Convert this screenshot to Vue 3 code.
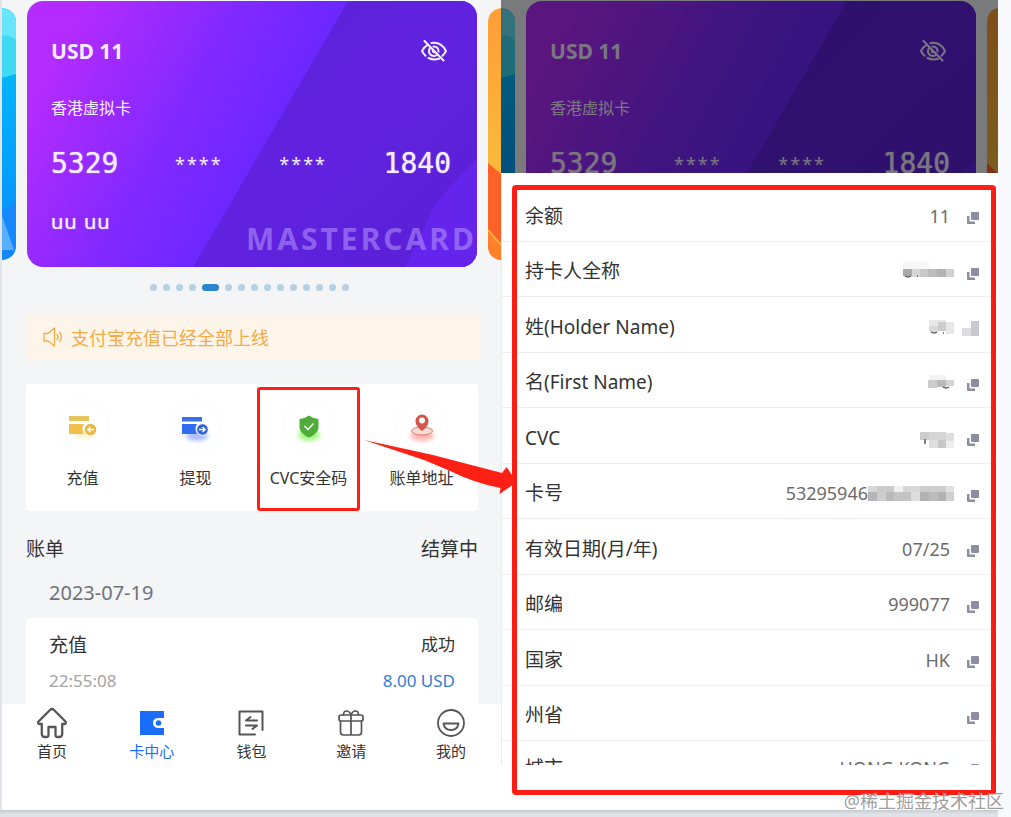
<script setup>
import { ref } from 'vue'

const screens = ['center', 'detail']
const activeTab = ref('card')
const activeDot = 4

const actions = [
  { value: 'recharge', label: '充值' },
  { value: 'withdraw', label: '提现' },
  { value: 'cvc', label: 'CVC安全码', marked: true },
  { value: 'address', label: '账单地址' },
]

const tabs = [
  { value: 'home', label: '首页' },
  { value: 'card', label: '卡中心' },
  { value: 'wallet', label: '钱包' },
  { value: 'invite', label: '邀请' },
  { value: 'mine', label: '我的' },
]

// mask cells: [x, y, width, height, color]
const details = [
  { label: '余额', value: '11' },
  {
    label: '持卡人全称',
    mask: [
      [35, 2, 26, 7, '#f6f6f6'],
      [35, 9, 9, 7, '#a9a9a9'],
      [44, 9, 8, 8, '#d6d6d6'],
      [52, 9, 8, 8, '#c9c9c9'],
      [60, 9, 9, 8, '#bdbdbd'],
      [69, 9, 9, 8, '#b3b3b3'],
      [78, 9, 8, 8, '#d0d0d0'],
    ],
    trace: 'M37 16q3 2 6 0M49 16h1',
  },
  {
    label: '姓(Holder Name)',
    hiddenCopy: true,
    mask: [
      [61, 4, 17, 6, '#e8e8e8'],
      [61, 10, 9, 6, '#d8d8d8'],
      [70, 6, 8, 9, '#cccccc'],
      [78, 6, 8, 12, '#e7e7e7'],
    ],
    trace: 'M63 16q3 2 6 0M75 17h1',
  },
  {
    label: '名(First Name)',
    mask: [
      [61, 4, 17, 5, '#f2f2f2'],
      [60, 9, 9, 8, '#cccccc'],
      [69, 9, 9, 7, '#b9b9b9'],
      [78, 9, 8, 6, '#d4d4d4'],
    ],
    trace: 'M75 16q3 2 6 0',
  },
  {
    label: 'CVC',
    mask: [
      [52, 5, 9, 8, '#cccccc'],
      [61, 5, 17, 8, '#d5d5d5'],
      [78, 6, 8, 8, '#dddddd'],
      [61, 13, 9, 8, '#dedede'],
      [70, 13, 8, 8, '#c8c8c8'],
      [78, 14, 8, 7, '#eeeeee'],
    ],
    trace: 'M57 12v5',
  },
  {
    label: '卡号',
    value: '53295946',
    mask: [
      [0, 4, 9, 6, '#d7d7d7'],
      [9, 4, 17, 6, '#cbcbcb'],
      [26, 4, 9, 6, '#f0f0f0'],
      [35, 4, 17, 6, '#d8d8d8'],
      [52, 4, 26, 6, '#cdcdcd'],
      [78, 4, 8, 6, '#e2e2e2'],
      [0, 10, 9, 9, '#b5b5b5'],
      [9, 10, 9, 9, '#cdcdcd'],
      [18, 10, 8, 9, '#b9b9b9'],
      [26, 10, 17, 9, '#c4c4c4'],
      [43, 10, 9, 9, '#dddddd'],
      [52, 10, 9, 9, '#b3b3b3'],
      [61, 10, 9, 9, '#bcbcbc'],
      [70, 10, 8, 9, '#b2b2b2'],
      [78, 10, 8, 9, '#cfcfcf'],
    ],
  },
  { label: '有效日期(月/年)', value: '07/25' },
  { label: '邮编', value: '999077' },
  { label: '国家', value: 'HK' },
  { label: '州省', value: '' },
  { label: '城市', value: 'HONG KONG' },
]
</script>

<template>
  <div class="page">
    <main class="board">
      <section v-for="screen in screens" :key="screen" class="phone" :class="screen">
        <div class="hero">
          <div class="carousel">
            <svg class="peek" viewBox="0 0 14 252" preserveAspectRatio="none" aria-hidden="true">
              <defs>
                <linearGradient id="sea" x1="0" y1="0" x2="0" y2="1">
                  <stop offset="0" stop-color="#00c3f6" />
                  <stop offset="1" stop-color="#078cff" />
                </linearGradient>
              </defs>
              <path d="M0 0Q14 2 14 15V237Q14 250 0 252Z" fill="url(#sea)" />
              <path d="M0 0Q14 2 14 15V66L0 70Z" fill="#3ed9f2" />
              <path d="M0 0Q14 2 14 15V32Q7 26 0 28Z" fill="#66e5fb" />
              <path d="M0 202Q10 200 14 190V237Q14 250 0 252Z" fill="#1688fb" />
              <path d="M0 208L12 242H0Z" fill="#5aaeff" />
            </svg>

            <article class="bank-card">
              <svg class="card-art" viewBox="0 0 450 266" preserveAspectRatio="none" aria-hidden="true">
                <defs>
                  <linearGradient id="violet" gradientUnits="userSpaceOnUse" x1="30" y1="50" x2="250" y2="170">
                    <stop offset="0" stop-color="#b42bff" />
                    <stop offset="0.55" stop-color="#8129ff" />
                    <stop offset="1" stop-color="#6727ff" />
                  </linearGradient>
                  <linearGradient id="deep" x1="0" y1="0" x2="1" y2="1">
                    <stop offset="0" stop-color="#5b20d6" />
                    <stop offset="0.5" stop-color="#6022df" />
                    <stop offset="1" stop-color="#5a1fd6" />
                  </linearGradient>
                </defs>
                <path d="M0 0H450V266H0Z" fill="url(#violet)" />
                <path d="M321 0H450V266H166L213 186Z" fill="url(#deep)" />
                <path d="M450 158Q414 192 402 216L378 266H450Z" fill="#6524ec" />
              </svg>
              <div class="card-body">
                <div class="card-top">
                  <strong class="balance">USD 11</strong>
                  <button type="button" class="eye-button" aria-label="显示余额">
                    <svg width="26" height="22" viewBox="0 0 26 22" fill="none" stroke="currentColor" stroke-width="2" stroke-linecap="round">
                      <path d="M7 4.600C4.500 6 2.600 8 1 11c1 2 2 3.500 3.500 4.800M10.500 3C17 2 22 5 25 11c-1 2-2 3.500-3.500 4.800M7.500 18q5 2.500 10.500 .8" />
                      <path d="M9 8c-2.500 4 0 8 4 8 1.300 0 2.300-.4 3.200-1.200M12.500 6.600c3.500-.2 5.300 2.200 5 5" />
                      <path d="M12.200 9.800c-1 1.300 0 2.600 1.600 2.400M3.500 1L22.500 20.500" />
                    </svg>
                  </button>
                </div>
                <p class="card-name">香港虚拟卡</p>
                <p class="card-number">
                  <span>5329</span>
                  <span class="stars">****</span>
                  <span class="stars">****</span>
                  <span>1840</span>
                </p>
                <p class="card-holder">uu uu</p>
              </div>
              <span class="card-brand">MASTERCARD</span>
            </article>

            <svg class="peek" viewBox="0 0 13 252" preserveAspectRatio="none" aria-hidden="true">
              <defs>
                <linearGradient id="sun" x1="0" y1="0" x2="0" y2="1">
                  <stop offset="0" stop-color="#ff9d36" />
                  <stop offset="0.6" stop-color="#f9b83c" />
                </linearGradient>
              </defs>
              <path d="M13 0Q0 2 0 15V237Q0 250 13 252Z" fill="url(#sun)" />
              <path d="M0 155L13 166V252Q0 250 0 237Z" fill="#ff6129" />
              <path d="M0 222L13 238V252Q0 250 0 237Z" fill="#ff7f2a" />
              <path d="M0 222L13 237" fill="none" stroke="#ffae3c" stroke-width="2" />
            </svg>
          </div>
        </div>

        <template v-if="screen === 'center'">
          <div class="dots">
            <span v-for="n in 15" :key="n" class="dot" :class="{ active: n - 1 === activeDot }"></span>
          </div>

          <div class="notice">
            <svg width="20" height="20" viewBox="0 0 20 20" fill="none" stroke="currentColor" stroke-width="1.3" stroke-linejoin="round" stroke-linecap="round" aria-hidden="true">
              <path d="M1 6.500h4L11.500 1v18L5 14H1z" />
              <path d="M14 7.500q2 2.500 0 5M16.500 5.500q4 4.500 0 9" />
            </svg>
            <span>支付宝充值已经全部上线</span>
          </div>

          <div class="actions">
            <button v-for="action in actions" :key="action.value" type="button" class="action">
              <span class="action-icon">
                <svg v-if="action.value === 'recharge'" width="48" height="48" viewBox="0 0 48 48">
                  <ellipse class="glow" cx="25" cy="32" rx="10" ry="4" fill="#fff0c4" />
                  <path d="M10 14h20v5H10z" fill="#e5c55c" />
                  <path d="M10 22h15q-3 5 0 10H10z" fill="#f0bf4c" />
                  <circle cx="31.500" cy="27.500" r="5.800" fill="#e8b84b" />
                  <path d="M35 27.500h-6m2.400-2.400L29 27.500l2.400 2.400" fill="none" stroke="#fff" stroke-width="1.500" />
                </svg>
                <svg v-else-if="action.value === 'withdraw'" width="48" height="48" viewBox="0 0 48 48">
                  <ellipse class="glow" cx="25" cy="34" rx="11" ry="5" fill="#a9bdff" />
                  <path d="M10 15h20v4.500H10z" fill="#3b6fe8" />
                  <path d="M10 22h15q-3 5 0 10H10z" fill="#316bf0" />
                  <circle cx="30.500" cy="27.500" r="5.800" fill="#3565d8" stroke="#fff" />
                  <path d="M27 27.500h6m-2.400-2.400L33 27.500l-2.400 2.400" fill="none" stroke="#fff" stroke-width="1.500" />
                </svg>
                <svg v-else-if="action.value === 'cvc'" width="48" height="48" viewBox="0 0 48 48">
                  <ellipse class="glow" cx="24" cy="33" rx="11" ry="6" fill="#a4f582" />
                  <path d="M24 13.500q4 3 9.500 3.500v9q-1 6-9.500 9.500-8.500-3.500-9.500-9.500v-9q5.500-.5 9.500-3.500z" fill="#4fac3b" />
                  <path d="M19.500 24l3.500 3.500 5.500-6" fill="none" stroke="#fff" stroke-width="1.500" />
                </svg>
                <svg v-else width="48" height="48" viewBox="0 0 48 48">
                  <ellipse class="glow" cx="24" cy="34" rx="12" ry="5" fill="#ffb5ad" />
                  <ellipse cx="24" cy="29" rx="10.500" ry="4" fill="#fbd9d4" stroke="#dc7a72" />
                  <path d="M24 29q-6.500-5-6.500-10a6.500 6.500 0 0 1 13 0q0 5-6.500 10z" fill="#d45549" />
                  <circle cx="24" cy="18.500" r="3" fill="#fff" />
                </svg>
              </span>
              <span class="action-label">{{ action.label }}</span>
              <span v-if="action.marked" class="mark">
                <svg class="arrow" width="154" height="56" viewBox="0 0 154 56" aria-hidden="true">
                  <path d="M0 0L69 15 138 33 142.500 27 153 42 135.500 54 136.500 48Q110 43 84 30L60 20z" fill="#ff2015" />
                </svg>
              </span>
            </button>
          </div>

          <div class="bill-head">
            <span>账单</span>
            <span>结算中</span>
          </div>
          <time class="bill-date" datetime="2023-07-19">2023-07-19</time>
          <div class="bill">
            <div class="bill-row">
              <span>充值</span>
              <span class="status">成功</span>
            </div>
            <div class="bill-row meta">
              <time>22:55:08</time>
              <span class="amount">8.00 USD</span>
            </div>
          </div>

          <nav class="tab-bar" aria-label="主导航">
            <button
              v-for="tab in tabs"
              :key="tab.value"
              type="button"
              class="tab"
              :class="{ active: activeTab === tab.value }"
              @click="activeTab = tab.value"
            >
              <svg width="32" height="32" viewBox="0 0 32 32" fill="none" stroke="#555" stroke-width="2" stroke-linecap="round" stroke-linejoin="round" aria-hidden="true">
                <path
                  v-if="tab.value === 'home'"
                  stroke-width="2.300"
                  d="M16 2q-1 0-2 1L2.500 14.500q-1 2.500 1 2.500h2.300v10q0 3 3 3h1.700q2 0 2-2v-8h7v8q0 2 2 2h1.700q3 0 3-3V17h2.300q2 0 1-2.500L18 3q-1-1-2-1z"
                />
                <g v-else-if="tab.value === 'card'" stroke="none">
                  <path d="M4 4h24v7h-5q-6 0-6 5t6 5h5v7H4z" fill="#1a6dff" />
                  <circle cx="22.500" cy="16" r="2.800" fill="#1a6dff" />
                </g>
                <g v-else-if="tab.value === 'wallet'">
                  <path d="M20 27.500H4.500V4.500h23V23" />
                  <path d="M11 13.500h11M11 13.500l4.500-3.500M11 18.500h11L17.500 22" />
                </g>
                <g v-else-if="tab.value === 'invite'" stroke-width="1.700">
                  <path d="M6 8h20q2 0 2 2v2q0 2-2 2H6q-2 0-2-2v-2q0-2 2-2zM5.500 14v11q0 3 3 3h15q3 0 3-3V14M16 8v20" />
                  <path d="M16 8q-1.500-4-4.500-4T8.500 8M16 8q1.500-4 4.500-4t3 4" />
                </g>
                <g v-else stroke-width="1.800">
                  <circle cx="16" cy="16" r="13" />
                  <path d="M8.500 16.500h15q-1 6.500-7.500 6.500t-7.500-6.500z" />
                </g>
              </svg>
              <span>{{ tab.label }}</span>
            </button>
          </nav>
        </template>

        <template v-else>
          <dl class="sheet">
            <div v-for="item in details" :key="item.label" class="sheet-row">
              <dt>{{ item.label }}</dt>
              <dd>
                <span>{{ item.value }}</span>
                <svg v-if="item.mask" class="mask" width="86" height="22" viewBox="0 0 86 22" aria-hidden="true">
                  <rect
                    v-for="(cell, i) in item.mask"
                    :key="i"
                    :x="cell[0]"
                    :y="cell[1]"
                    :width="cell[2]"
                    :height="cell[3]"
                    :fill="cell[4]"
                  />
                  <path v-if="item.trace" :d="item.trace" fill="none" stroke="#555" stroke-width="1.500" />
                </svg>
              </dd>
              <button type="button" class="copy-button" :aria-label="'复制' + item.label">
                <svg v-if="item.hiddenCopy" width="17" height="16" viewBox="0 0 17 16">
                  <path d="M0 7h9v8H0z" fill="#dedee2" />
                  <path d="M9 0h8v15H9z" fill="#c9c9cf" />
                </svg>
                <svg v-else width="12" height="12" viewBox="0 0 12 12" fill="#8d8da1">
                  <path d="M5 0h6q1 0 1 1v6q0 1-1 1H5q-1 0-1-1V1q0-1 1-1z" />
                  <path d="M0 4h2.500v5.500H8V12H1q-1 0-1-1z" />
                </svg>
              </button>
            </div>
          </dl>
          <div class="frame"></div>
        </template>
      </section>
    </main>
    <div class="floor"></div>
    <span class="watermark">@稀土掘金技术社区</span>
  </div>
</template>

<style>
body {
  background: #f8f9fd;
}
</style>

<style scoped>
.page {
  position: relative;
  box-sizing: border-box;
  min-height: 100vh;
  padding: 0 13px 0 0;
  display: flex;
  flex-direction: column;
  overflow: hidden;
  color: #333;
  font-family: 'Noto Sans', 'Noto Sans CJK SC', sans-serif;
}

p,
dl,
dd {
  margin: 0;
}

button {
  padding: 0;
  border: 0;
  color: inherit;
  background: transparent;
  font: inherit;
}

svg {
  display: block;
}

.board {
  flex: 1;
  display: grid;
  grid-template-columns: 499fr 497fr;
  border-left: 2px solid #e1e4e8;
  background: #fff;
}

.floor {
  height: 7px;
  background: linear-gradient(#c4c9cd, #dfe3e8 4px);
}

.phone {
  position: relative;
  min-width: 0;
}

.hero {
  position: relative;
  padding-top: 1px;
  background: #f3f5f7;
}

.carousel {
  display: grid;
  grid-template-columns: 14px minmax(0, 1fr) 13px;
  gap: 11px;
  align-items: center;
}

.peek {
  width: 100%;
  height: 252px;
}

.bank-card {
  position: relative;
  box-sizing: border-box;
  height: 266px;
  padding: 36px 26px 0 24px;
  border-radius: 16px;
  overflow: hidden;
  color: #f4edff;
}

.card-art {
  position: absolute;
  inset: 0;
  width: 100%;
  height: 100%;
}

.card-body {
  position: relative;
}

.card-top {
  display: flex;
  align-items: center;
  justify-content: space-between;
  height: 28px;
}

.card-top .eye-button {
  margin-right: 4px;
}

.balance {
  font-size: 21px;
  line-height: 28px;
}

.card-name {
  margin-top: 31px;
  font-size: 16px;
  line-height: 24px;
}

.card-number {
  display: flex;
  align-items: center;
  justify-content: space-between;
  margin-top: 28px;
  font-family: 'DejaVu Sans Mono', monospace;
  font-size: 28px;
  line-height: 32px;
  text-shadow: 0 0 1px currentColor;
}

.stars {
  font-family: 'Noto Sans', sans-serif;
  font-size: 18px;
  letter-spacing: 2px;
  text-shadow: none;
}

.card-holder {
  margin-top: 28px;
  font-size: 20px;
  line-height: 28px;
  letter-spacing: 1px;
  text-shadow: 0 0 1px currentColor;
}

.card-brand {
  position: absolute;
  right: 0;
  bottom: 8px;
  color: rgba(190, 160, 255, 0.5);
  font-size: 30px;
  font-weight: 700;
  line-height: 40px;
  letter-spacing: 3px;
}

.center {
  display: flex;
  flex-direction: column;
  align-self: start;
  background: #f3f5f7;
}

.dots {
  display: flex;
  justify-content: center;
  gap: 6px;
  margin: 17px 4px 0 0;
}

.dot {
  width: 7px;
  height: 7px;
  border-radius: 4px;
  background: #b5cfe3;
}

.dot.active {
  width: 17px;
  background: #2b86d1;
}

.notice {
  display: flex;
  align-items: center;
  gap: 8px;
  height: 46px;
  margin: 23px 21px 0 24px;
  padding-left: 17px;
  border-radius: 3px;
  color: #f5ab45;
  background: #fef5ea;
  font-size: 18px;
}

.actions {
  display: grid;
  grid-template-columns: repeat(4, minmax(0, 1fr));
  height: 127px;
  margin: 24px 23px 0 24px;
  border-radius: 4px;
  background: #fff;
}

.action {
  position: relative;
  display: flex;
  flex-direction: column;
  align-items: center;
  padding-top: 18px;
  font-size: 16px;
}

.action-icon {
  border-radius: 24px;
  box-shadow: 0 0 10px #f8f9ff;
}

.glow {
  filter: blur(2px);
}

.action-label {
  margin-top: 16px;
  line-height: 24px;
  white-space: nowrap;
}

.mark {
  position: absolute;
  inset: 3px 5px 0 5px;
  border: 3px solid #ff2015;
  border-radius: 3px;
}

.arrow {
  position: absolute;
  z-index: 2;
  top: 50px;
  left: calc(100% + 7px);
}

.bill-head {
  display: flex;
  justify-content: space-between;
  margin: 25px 23px 0 24px;
  font-size: 19px;
  line-height: 26px;
}

.bill-date {
  margin: 18px 0 0 47px;
  color: #707277;
  font-size: 20px;
  line-height: 26px;
}

.bill {
  box-sizing: border-box;
  height: 86px;
  margin: 12px 23px 0 24px;
  padding: 14px 23px 0;
  border-radius: 4px 4px 0 0;
  background: #fff;
}

.bill-row {
  display: flex;
  justify-content: space-between;
  font-size: 19px;
  line-height: 26px;
}

.bill-row .status,
.bill-row.meta {
  font-size: 17px;
}

.bill-row.meta {
  margin-top: 10px;
  color: #a3a3a3;
}

.bill-row .amount {
  color: #2f7dd6;
}

.tab-bar {
  display: grid;
  grid-template-columns: repeat(5, minmax(0, 1fr));
  height: 62px;
  background: #fff;
}

.tab {
  display: flex;
  flex-direction: column;
  align-items: center;
  padding-top: 3px;
  font-size: 15px;
  line-height: 24px;
}

.tab.active {
  color: #1a6dff;
}

.detail .hero {
  height: 172px;
  overflow: hidden;
}

.detail .hero::after {
  content: '';
  position: absolute;
  inset: 0;
  background: rgba(0, 0, 0, 0.5);
}

.detail .carousel {
  grid-template-columns: 14px minmax(0, 1fr) 11px;
}

.sheet {
  box-sizing: border-box;
  max-height: 592px;
  padding-top: 13px;
  overflow: hidden;
  border-left: 1px solid #e9ebef;
}

.sheet-row {
  box-sizing: border-box;
  display: flex;
  align-items: center;
  height: 56px;
  padding: 4px 19px 0 23px;
  border-bottom: 1px solid #efeff1;
  font-size: 19px;
  line-height: 26px;
}

.sheet-row:nth-child(even) {
  height: 55px;
}

.sheet-row:last-child {
  height: 54px;
  padding-top: 0;
}

.sheet-row dt {
  flex: 1;
}

.sheet-row dd {
  display: flex;
  align-items: center;
  color: #6b6b6b;
  font-size: 18px;
}

.mask {
  margin-right: -4px;
}

.copy-button {
  display: flex;
  justify-content: flex-end;
  width: 29px;
  margin-top: 5px;
}

.frame {
  position: absolute;
  inset: 185px 2px 15px 11px;
  border: 5px solid #ff1d14;
  border-radius: 4px;
  pointer-events: none;
}

.watermark {
  position: absolute;
  right: 7px;
  bottom: 3px;
  color: rgba(140, 140, 140, 0.85);
  font-size: 18px;
  line-height: 26px;
  text-shadow: 1px 1px 0 rgba(255, 255, 255, 0.7);
}
</style>
